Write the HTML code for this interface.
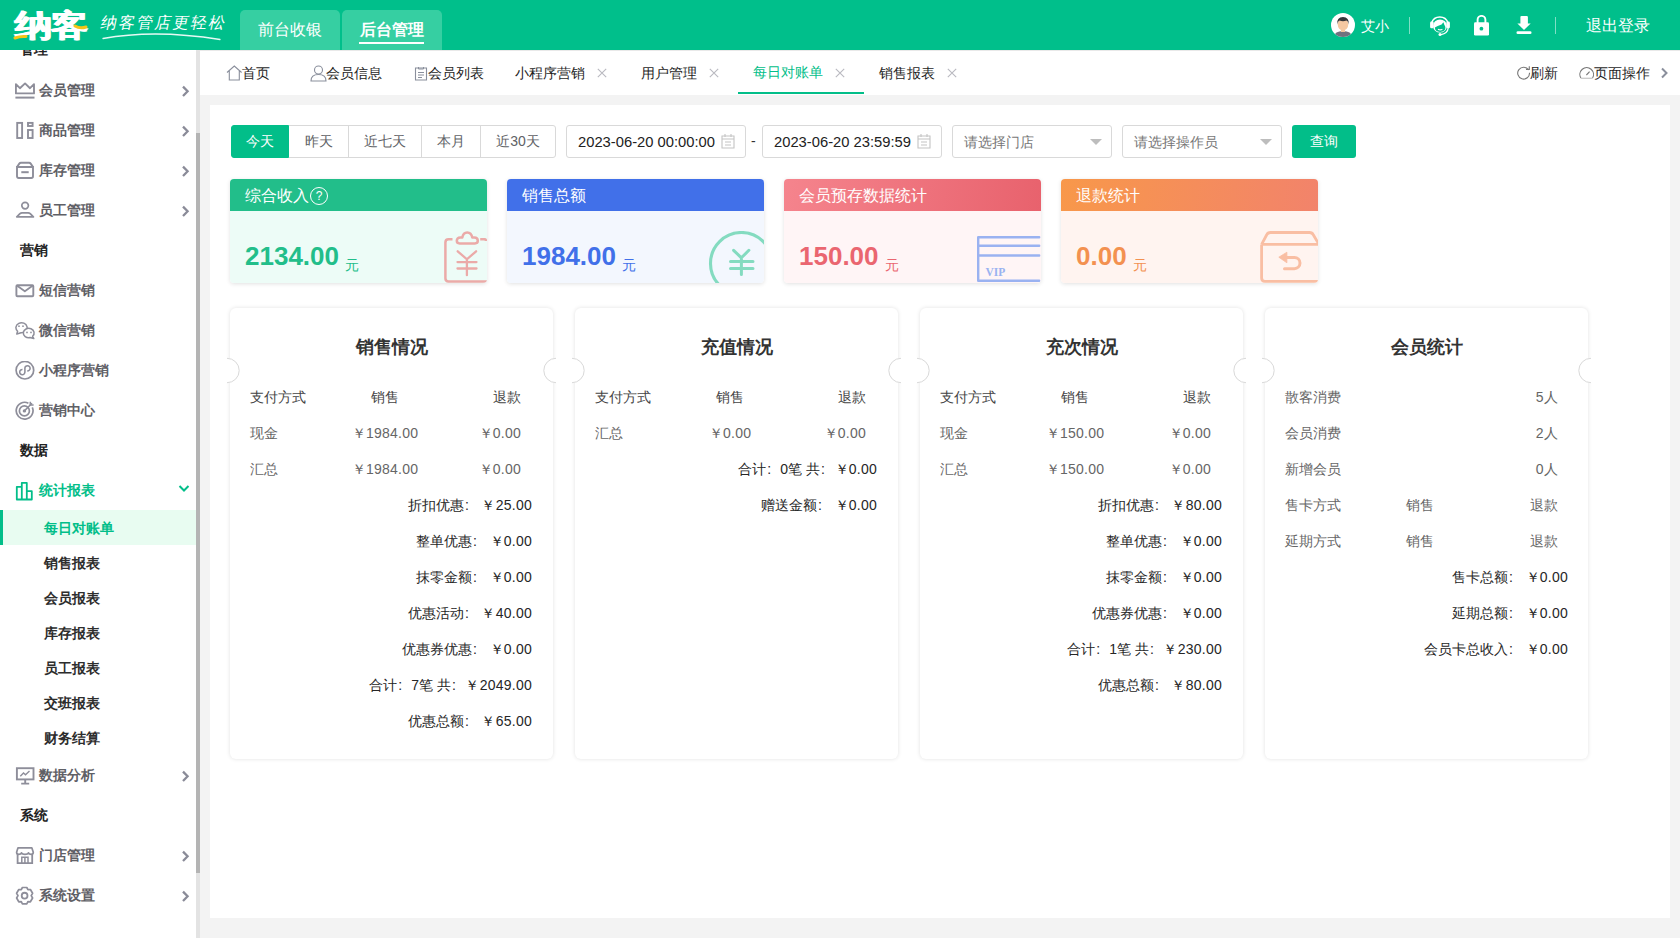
<!DOCTYPE html>
<html><head><meta charset="utf-8">
<style>
*{box-sizing:border-box;margin:0;padding:0}
html,body{width:1680px;height:938px;overflow:hidden;background:#f3f3f3;font-family:"Liberation Sans",sans-serif;font-size:14px;color:#333}
.abs{position:absolute}
#hdr{position:absolute;left:0;top:0;width:1680px;height:50px;background:#00bf8b}
.htab{position:absolute;top:10px;height:40px;width:100px;background:#36cfa2;border-radius:5px 5px 0 0;color:#fff;font-size:16px;text-align:center;line-height:40px}
#side{position:absolute;left:0;top:50px;width:196px;height:888px;background:#fff;overflow:hidden}
#sbar{position:absolute;left:196px;top:50px;width:4px;height:888px;background:#e3e3e3}
#sthumb{position:absolute;left:196px;top:133px;width:4px;height:740px;background:#b4b4b4}
.si{position:absolute;left:0;width:196px;height:20px;line-height:20px;font-weight:bold;color:#5f6066}
.si .t{position:absolute;left:39px;top:0}
.si svg.ic{position:absolute;left:15px;top:0}
.si .chev{position:absolute;left:181px;top:5px}
.gt{position:absolute;left:20px;height:20px;line-height:20px;font-weight:bold;color:#222}
.sub{position:absolute;left:44px;height:20px;line-height:20px;font-weight:bold;color:#2d2d2d}
#tabs{position:absolute;left:200px;top:50px;width:1480px;height:45px;background:#fff}
.tb{position:absolute;top:13px;height:20px;line-height:20px;color:#1e1e1e;white-space:nowrap}
.tb .x{color:#bbb;font-size:15px}
#panel{position:absolute;left:210px;top:105px;width:1460px;height:813px;background:#fff}
.btn{position:absolute;top:125px;height:33px;line-height:31px;border:1px solid #d9d9d9;color:#606266;text-align:center}
.inp{position:absolute;top:125px;height:33px;border:1px solid #d9d9d9;border-radius:3px;background:#fff}
.card{position:absolute;top:179px;width:257px;height:104px;border-radius:4px;overflow:hidden;box-shadow:0 1px 4px rgba(0,0,0,.12)}
.card .h{height:32px;line-height:32px;padding-left:15px;padding-top:1px;color:#fff;font-size:16px}
.card .b{height:72px;position:relative}
.card .v{position:absolute;left:15px;top:30px;font-size:26px;font-weight:bold;line-height:30px;white-space:nowrap}
.card .v small{font-size:14px;font-weight:normal;margin-left:6px;position:relative;top:5px}
.ic2{position:absolute;right:0;bottom:0}
.tk{position:absolute;top:308px;width:323px;height:451px;background:#fff;border-radius:6px;box-shadow:0 0 4px rgba(0,0,0,.12)}
.tk .tt{position:absolute;left:0;width:323px;top:336px;text-align:center;font-size:18px;font-weight:bold;color:#333}
.row{position:absolute;height:20px;line-height:20px;white-space:nowrap}
.val,.dg{letter-spacing:0.25px}
.cl{display:inline-block;width:14px;padding-left:1px;font-style:normal;text-align:left}
</style></head><body>
<div id="hdr">
  <div class="abs" style="left:15px;top:6px;height:40px;color:#fff;font-size:31px;font-weight:900;line-height:40px;letter-spacing:-1px;white-space:nowrap;transform:scaleX(1.2);transform-origin:0 0;text-shadow:0.5px 0 0 #fff,-0.5px 0 0 #fff">纳客</div>
  <svg class="abs" style="left:10px;top:20px" width="80" height="22" viewBox="0 0 80 22"><path d="M5 18Q10 16 16 16.5" stroke="#f5c518" stroke-width="3" fill="none" stroke-linecap="round"/><path d="M65 6Q70 9 76 7" stroke="#f5c518" stroke-width="3" fill="none" stroke-linecap="round"/></svg>
  <div class="abs" style="left:101px;top:12px;width:130px;height:22px;color:#fff;font-size:16px;line-height:22px;letter-spacing:2px;white-space:nowrap;transform:skewX(-12deg);font-family:'Liberation Serif',serif">纳客管店更轻松</div>
  <svg class="abs" style="left:100px;top:30px" width="125" height="14" viewBox="0 0 125 14"><path d="M3 8.5Q55 -1 120 9.5" stroke="#fff" stroke-width="1.3" fill="none" stroke-linecap="round" opacity=".9"/></svg>
  <svg class="abs" style="left:1331px;top:13px" width="24" height="24" viewBox="0 0 24 24"><defs><clipPath id="av"><circle cx="12" cy="12" r="12"/></clipPath></defs><circle cx="12" cy="12" r="12" fill="#fff"/><g clip-path="url(#av)"><path d="M2.5 25Q3 18 12 18Q21 18 21.5 25Z" fill="#71717f"/><rect x="10" y="15" width="4" height="4" fill="#f3c6a0"/><ellipse cx="12" cy="11.3" rx="5.3" ry="6.2" fill="#f5c8a2"/><path d="M6.2 11.5Q5.5 4 12 4Q18.3 4 17.8 11.5Q17.2 8 15.5 7.5Q12 8.8 8.5 7.5Q6.8 8 6.2 11.5Z" fill="#35363a"/></g></svg>
  <svg class="abs" style="left:1429px;top:13px" width="22" height="23" viewBox="0 0 22 23"><path d="M2.6 10A8.6 8.6 0 0 1 19 10" fill="none" stroke="#fff" stroke-width="1.4"/><ellipse cx="11" cy="13" rx="6.9" ry="6.6" fill="#fff"/><path d="M5.9 14.6Q8.2 12.6 12.6 11.4L14.4 9.2L15.3 11.7Q16.4 13 16.4 14.8Q16.4 18.9 11.2 18.9Q5.9 18.9 5.9 14.6Z" fill="#00bf8b"/><path d="M9 16.2Q11.2 17.6 13.4 16.2" fill="none" stroke="#fff" stroke-width="1.1"/><rect x="1.1" y="8.6" width="3.6" height="6.6" rx="1.3" fill="#fff"/><rect x="17.3" y="8.6" width="3.6" height="6.6" rx="1.3" fill="#fff"/><path d="M19.2 15Q18.6 20.6 12 21.6" fill="none" stroke="#fff" stroke-width="1.3"/><circle cx="11" cy="21.5" r="1.5" fill="#fff"/></svg>
  <svg class="abs" style="left:1473px;top:15px" width="17" height="21" viewBox="0 0 17 21"><path d="M4.6 8.5V4.8A3.9 3.9 0 0 1 12.4 4.8V8.5" fill="none" stroke="#fff" stroke-width="1.9"/><rect x="1" y="7.3" width="15" height="13.2" rx="1.3" fill="#fff"/><circle cx="8.4" cy="13.7" r="1.9" fill="#00bf8b"/></svg>
  <svg class="abs" style="left:1516px;top:15px" width="16" height="20" viewBox="0 0 16 20"><rect x="4.4" y="0.9" width="7.5" height="8.5" rx="1.2" fill="#fff"/><path d="M1.4 8.4H14.7L8 15.1Z" fill="#fff"/><rect x="0.5" y="16.2" width="15" height="2.9" rx="1.3" fill="#fff"/></svg>

  <div class="htab" style="left:240px">前台收银</div>
  <div class="htab" style="left:342px;font-weight:bold">后台管理<div style="position:absolute;left:17px;top:32px;width:65px;height:2px;background:#fff"></div></div>
  <div class="abs" style="left:1361px;top:16px;color:#fff;font-size:14px;line-height:20px">艾小</div>
  <div class="abs" style="left:1409px;top:17px;width:1px;height:17px;background:rgba(255,255,255,.5)"></div>
  <div class="abs" style="left:1555px;top:17px;width:1px;height:17px;background:rgba(255,255,255,.5)"></div>
  <div class="abs" style="left:1586px;top:15px;color:#fff;font-size:16px;line-height:22px">退出登录</div>
</div>
<div id="side">
  <div class="gt" style="top:-11px;color:#222">管理</div>
  <!-- 会员管理 -->
  <div class="si" style="top:30px">
    <svg class="ic" width="21" height="20" viewBox="0 0 21 20" style="top:2px"><path d="M0.9 11.4V2.2L4.9 6.2L10.05 1.4L15 6.2L19 2.2V11.4Z" fill="none" stroke="#8e8e9a" stroke-width="1.9" stroke-linejoin="round"/><path d="M0.4 15.6H19.5" stroke="#8e8e9a" stroke-width="2"/></svg>
    <span class="t">会员管理</span><svg class="chev" width="9" height="12" viewBox="0 0 9 12"><path d="M2 1.6L6.6 6.3L2 11" fill="none" stroke="#8a8b98" stroke-width="2.3"/></svg>
  </div>
  <!-- 商品管理 -->
  <div class="si" style="top:70px">
    <svg class="ic" width="21" height="20" viewBox="0 0 21 20" style="top:1px"><rect x="2.2" y="1.9" width="4.9" height="15.1" fill="none" stroke="#8e8e9a" stroke-width="1.9"/><rect x="13" y="1.9" width="4.6" height="3.1" fill="none" stroke="#8e8e9a" stroke-width="1.9"/><rect x="13" y="9" width="4.6" height="8" fill="none" stroke="#8e8e9a" stroke-width="1.9"/></svg>
    <span class="t">商品管理</span><svg class="chev" width="9" height="12" viewBox="0 0 9 12"><path d="M2 1.6L6.6 6.3L2 11" fill="none" stroke="#8a8b98" stroke-width="2.3"/></svg>
  </div>
  <!-- 库存管理 -->
  <div class="si" style="top:110px">
    <svg class="ic" width="21" height="20" viewBox="0 0 21 20" style="top:1px"><path d="M2 6L4.3 2.6Q4.9 1.7 6 1.7H14Q15.1 1.7 15.7 2.6L18 6" fill="none" stroke="#8e8e9a" stroke-width="1.9" stroke-linejoin="round"/><path d="M2 6H18V15.3Q18 17 16.3 17H3.7Q2 17 2 15.3Z" fill="none" stroke="#8e8e9a" stroke-width="1.9"/><path d="M6.3 11.2H13.7" stroke="#8e8e9a" stroke-width="2"/></svg>
    <span class="t">库存管理</span><svg class="chev" width="9" height="12" viewBox="0 0 9 12"><path d="M2 1.6L6.6 6.3L2 11" fill="none" stroke="#8a8b98" stroke-width="2.3"/></svg>
  </div>
  <!-- 员工管理 -->
  <div class="si" style="top:150px">
    <svg class="ic" width="21" height="20" viewBox="0 0 21 20" style="top:1px"><circle cx="10.1" cy="4.6" r="3.3" fill="none" stroke="#8e8e9a" stroke-width="1.7"/><path d="M1.8 15.8L5 12.6Q5.8 11.9 7 11.9H13.2Q14.4 11.9 15.2 12.6L18.4 15.8Z" fill="none" stroke="#8e8e9a" stroke-width="1.8" stroke-linejoin="round"/></svg>
    <span class="t">员工管理</span><svg class="chev" width="9" height="12" viewBox="0 0 9 12"><path d="M2 1.6L6.6 6.3L2 11" fill="none" stroke="#8a8b98" stroke-width="2.3"/></svg>
  </div>
  <div class="gt" style="top:190px">营销</div>
  <!-- 短信营销 -->
  <div class="si" style="top:230px">
    <svg class="ic" width="21" height="20" viewBox="0 0 21 20" style="top:3px"><rect x="1.4" y="2.3" width="16.9" height="10.9" rx="1" fill="none" stroke="#8e8e9a" stroke-width="1.9"/><path d="M1.8 2.6L9.85 8.3L17.9 2.6" fill="none" stroke="#8e8e9a" stroke-width="1.8" stroke-linejoin="round"/></svg>
    <span class="t">短信营销</span>
  </div>
  <!-- 微信营销 -->
  <div class="si" style="top:270px">
    <svg class="ic" width="21" height="20" viewBox="0 0 21 20" style="top:1px"><path d="M2.6 10.3A5.6 5 0 1 1 6 11.7L1.8 13Z" fill="#fff" stroke="#8e8e9a" stroke-width="1.5" stroke-linejoin="round"/><path d="M17.6 15.3A5.4 4.7 0 1 0 15 16.6L18.8 17.6Z" fill="#fff" stroke="#8e8e9a" stroke-width="1.5" stroke-linejoin="round"/><circle cx="4" cy="5.2" r="0.85" fill="#8e8e9a"/><circle cx="8" cy="5.2" r="0.85" fill="#8e8e9a"/><circle cx="12" cy="11.4" r="0.85" fill="#8e8e9a"/><circle cx="16" cy="11.4" r="0.85" fill="#8e8e9a"/></svg>
    <span class="t">微信营销</span>
  </div>
  <!-- 小程序营销 -->
  <div class="si" style="top:310px">
    <svg class="ic" width="21" height="20" viewBox="0 0 21 20" style="top:1px"><circle cx="9.9" cy="9.2" r="8.8" fill="none" stroke="#8e8e9a" stroke-width="1.7"/><path d="M7.5 8.5A2.6 2.6 0 1 0 9.9 11.1V7.3A2.6 2.6 0 1 1 12.3 9.9" fill="none" stroke="#8e8e9a" stroke-width="1.6"/></svg>
    <span class="t">小程序营销</span>
  </div>
  <!-- 营销中心 -->
  <div class="si" style="top:350px">
    <svg class="ic" width="21" height="20" viewBox="0 0 21 20" style="top:1px"><path d="M17.3 6.3A8.4 8.4 0 1 1 13.4 2.2" fill="none" stroke="#8e8e9a" stroke-width="1.7"/><circle cx="9.4" cy="9.9" r="5" fill="none" stroke="#8e8e9a" stroke-width="1.7"/><circle cx="9.4" cy="9.9" r="1.7" fill="#8e8e9a"/><path d="M9.4 9.9L17 2.3" stroke="#8e8e9a" stroke-width="1.5"/><path d="M15.3 0.8V4H18.6" fill="none" stroke="#8e8e9a" stroke-width="1.5"/></svg>
    <span class="t">营销中心</span>
  </div>
  <div class="gt" style="top:390px">数据</div>
  <!-- 统计报表 -->
  <div class="si" style="top:430px;color:#02be89">
    <svg class="ic" width="21" height="20" viewBox="0 0 21 20" style="top:1px"><path d="M1.8 18.5V5.8H6.8V18.5ZM6.8 18.5V1.8H11.8V18.5ZM11.8 18.5V10.2H16.8V18.5Z" fill="none" stroke="#02be89" stroke-width="1.8" stroke-linejoin="round"/></svg>
    <span class="t">统计报表</span><svg class="chev" width="12" height="9" viewBox="0 0 12 9" style="left:178px;top:4px"><path d="M1.5 2L6 6.5L10.5 2" fill="none" stroke="#02be89" stroke-width="2"/></svg>
  </div>
  <div style="position:absolute;left:0;top:460px;width:196px;height:35px;background:#e8fcf1"></div>
  <div style="position:absolute;left:0;top:460px;width:3px;height:35px;background:#02be89"></div>
  <div class="sub" style="top:468px;color:#02be89">每日对账单</div>
  <div class="sub" style="top:503px">销售报表</div>
  <div class="sub" style="top:538px">会员报表</div>
  <div class="sub" style="top:573px">库存报表</div>
  <div class="sub" style="top:608px">员工报表</div>
  <div class="sub" style="top:643px">交班报表</div>
  <div class="sub" style="top:678px">财务结算</div>
  <!-- 数据分析 -->
  <div class="si" style="top:715px">
    <svg class="ic" width="21" height="20" viewBox="0 0 21 20" style="top:2px"><rect x="1.9" y="1.2" width="16.6" height="11.2" fill="none" stroke="#8e8e9a" stroke-width="1.9"/><path d="M5.3 9.3L8.5 6L10.5 7.8L14.5 4" fill="none" stroke="#8e8e9a" stroke-width="1.4"/><path d="M10.2 12.4V16.2M6.2 16.6H14.2" stroke="#8e8e9a" stroke-width="1.9"/></svg>
    <span class="t">数据分析</span><svg class="chev" width="9" height="12" viewBox="0 0 9 12"><path d="M2 1.6L6.6 6.3L2 11" fill="none" stroke="#8a8b98" stroke-width="2.3"/></svg>
  </div>
  <div class="gt" style="top:755px">系统</div>
  <!-- 门店管理 -->
  <div class="si" style="top:795px">
    <svg class="ic" width="21" height="20" viewBox="0 0 21 20" style="top:1px"><path d="M3 1.8H16.8L18.3 6.3Q18.3 8.3 16.2 8.3Q14.2 8.3 13.5 6.8Q12.8 8.3 10 8.3Q7.2 8.3 6.5 6.8Q5.8 8.3 3.7 8.3Q1.6 8.3 1.6 6.3Z" fill="none" stroke="#8e8e9a" stroke-width="1.7" stroke-linejoin="round"/><path d="M2.6 8V17.2H17.2V8" fill="none" stroke="#8e8e9a" stroke-width="1.8"/><path d="M6.8 17.2V11.3H13V17.2M9.9 11.3V17.2" fill="none" stroke="#8e8e9a" stroke-width="1.5"/></svg>
    <span class="t">门店管理</span><svg class="chev" width="9" height="12" viewBox="0 0 9 12"><path d="M2 1.6L6.6 6.3L2 11" fill="none" stroke="#8a8b98" stroke-width="2.3"/></svg>
  </div>
  <!-- 系统设置 -->
  <div class="si" style="top:835px">
    <svg class="ic" width="21" height="20" viewBox="0 0 21 20" style="top:1px"><path d="M7.4 1.5H11.8L12.9 3.7L15.4 3.5L17.6 7.3L16.2 9.6L17.6 12L15.4 15.8L12.9 15.6L11.8 17.8H7.4L6.3 15.6L3.8 15.8L1.6 12L3 9.6L1.6 7.3L3.8 3.5L6.3 3.7Z" fill="none" stroke="#8e8e9a" stroke-width="1.7" stroke-linejoin="round"/><circle cx="9.6" cy="9.65" r="2.9" fill="none" stroke="#8e8e9a" stroke-width="1.8"/></svg>
    <span class="t">系统设置</span><svg class="chev" width="9" height="12" viewBox="0 0 9 12"><path d="M2 1.6L6.6 6.3L2 11" fill="none" stroke="#8a8b98" stroke-width="2.3"/></svg>
  </div>
</div>

<div id="sbar"></div><div id="sthumb"></div>
<div id="tabs">
  <div style="position:absolute;left:0;top:0;width:1480px;height:1px;background:#e9e9e9"></div>
  <svg class="abs" style="left:26px;top:15px" width="17" height="16" viewBox="0 0 17 16"><path d="M1 7.5L8.3 1L15.6 7.5M3.3 5.8V15H13.3V5.8" fill="none" stroke="#8a8f9c" stroke-width="1.1"/></svg>
  <div class="tb" style="left:42px">首页</div>
  <svg class="abs" style="left:110px;top:15px" width="17" height="17" viewBox="0 0 17 17"><circle cx="8.5" cy="5" r="4" fill="none" stroke="#8a8f9c" stroke-width="1.1"/><path d="M1 16Q1 9.5 8.5 9.5Q16 9.5 16 16Z" fill="none" stroke="#8a8f9c" stroke-width="1.1"/></svg>
  <div class="tb" style="left:126px">会员信息</div>
  <svg class="abs" style="left:214px;top:16px" width="14" height="15" viewBox="0 0 14 15"><path d="M1.5 2H12.5V14H1.5Z" fill="none" stroke="#8a8f9c" stroke-width="1.1"/><path d="M4.5 1V3H9.5V1M4 6.5H10M4 9H10M4 11.5H8" fill="none" stroke="#8a8f9c" stroke-width="1"/></svg>
  <div class="tb" style="left:228px">会员列表</div>
  <div class="tb" style="left:315px">小程序营销</div><div class="tb" style="left:397px;width:10px"><svg width="10" height="10" viewBox="0 0 10 10" style="position:absolute;left:0;top:5px"><path d="M0.8 0.8L9.2 9.2M9.2 0.8L0.8 9.2" stroke="#b9b9c0" stroke-width="1.1"/></svg></div>
  <div class="tb" style="left:441px">用户管理</div><div class="tb" style="left:509px;width:10px"><svg width="10" height="10" viewBox="0 0 10 10" style="position:absolute;left:0;top:5px"><path d="M0.8 0.8L9.2 9.2M9.2 0.8L0.8 9.2" stroke="#b9b9c0" stroke-width="1.1"/></svg></div>
  <div class="tb" style="left:553px;top:12px;color:#02be89">每日对账单</div><div class="tb" style="left:635px;width:10px"><svg width="10" height="10" viewBox="0 0 10 10" style="position:absolute;left:0;top:5px"><path d="M0.8 0.8L9.2 9.2M9.2 0.8L0.8 9.2" stroke="#b9b9c0" stroke-width="1.1"/></svg></div>
  <div style="position:absolute;left:538px;top:42px;width:126px;height:2px;background:#02be89"></div>
  <div class="tb" style="left:679px">销售报表</div><div class="tb" style="left:747px;width:10px"><svg width="10" height="10" viewBox="0 0 10 10" style="position:absolute;left:0;top:5px"><path d="M0.8 0.8L9.2 9.2M9.2 0.8L0.8 9.2" stroke="#b9b9c0" stroke-width="1.1"/></svg></div>
  <svg class="abs" style="left:1316px;top:15px" width="15" height="15" viewBox="0 0 15 15"><path d="M12.6 5A5.9 5.9 0 1 0 13.5 7.8" fill="none" stroke="#777" stroke-width="1.1"/><path d="M13.3 1.2V4.4H10" fill="none" stroke="#777" stroke-width="1.1"/></svg>
  <div class="tb" style="left:1330px">刷新</div>
  <svg class="abs" style="left:1379px;top:16px" width="16" height="14" viewBox="0 0 16 14"><path d="M1.9 12A6.8 6.8 0 1 1 13.5 12" fill="none" stroke="#777" stroke-width="1.1"/><path d="M1.8 12.3H13.6" stroke="#c9c9c9" stroke-width="1.3"/><path d="M7.4 9L10.6 5.6" stroke="#777" stroke-width="1.1"/></svg>
  <div class="tb" style="left:1394px">页面操作</div>
  <svg class="abs" style="left:1460px;top:17px" width="9" height="12" viewBox="0 0 9 12"><path d="M2 1.5L6.5 6L2 10.5" fill="none" stroke="#8a8f9c" stroke-width="2"/></svg>
</div>

<div id="panel"></div>
<!-- filter -->
<div class="btn" style="left:231px;width:58px;background:#02be89;border-color:#02be89;color:#fff;border-radius:3px 0 0 3px">今天</div>
<div class="btn" style="left:289px;width:60px;border-left:none">昨天</div>
<div class="btn" style="left:348px;width:74px">近七天</div>
<div class="btn" style="left:421px;width:60px">本月</div>
<div class="btn" style="left:480px;width:76px;border-radius:0 3px 3px 0">近30天</div>
<div class="inp" style="left:566px;width:180px"><span class="abs" style="left:11px;top:6px;line-height:20px;color:#222;font-size:14.75px;white-space:nowrap">2023-06-20 00:00:00</span>
 <svg class="abs" style="left:154px;top:7px" width="14" height="16" viewBox="0 0 14 16"><path d="M1 3H13V15H1Z" fill="none" stroke="#c4c4c4" stroke-width="1.1"/><path d="M4 1V4M10 1V4M1 6H13M4 9H10M4 12H10" fill="none" stroke="#c4c4c4" stroke-width="1.1"/></svg></div>
<div class="abs" style="left:751px;top:132px;line-height:18px;color:#333">-</div>
<div class="inp" style="left:762px;width:180px"><span class="abs" style="left:11px;top:6px;line-height:20px;color:#222;font-size:14.75px;white-space:nowrap">2023-06-20 23:59:59</span>
 <svg class="abs" style="left:154px;top:7px" width="14" height="16" viewBox="0 0 14 16"><path d="M1 3H13V15H1Z" fill="none" stroke="#c4c4c4" stroke-width="1.1"/><path d="M4 1V4M10 1V4M1 6H13M4 9H10M4 12H10" fill="none" stroke="#c4c4c4" stroke-width="1.1"/></svg></div>
<div class="inp" style="left:952px;width:160px"><span class="abs" style="left:11px;top:7px;line-height:18px;color:#777">请选择门店</span>
 <svg class="abs" style="left:137px;top:13px" width="12" height="7" viewBox="0 0 12 7"><path d="M0 0H12L6 6Z" fill="#bdbdbd"/></svg></div>
<div class="inp" style="left:1122px;width:160px"><span class="abs" style="left:11px;top:7px;line-height:18px;color:#777">请选择操作员</span>
 <svg class="abs" style="left:137px;top:13px" width="12" height="7" viewBox="0 0 12 7"><path d="M0 0H12L6 6Z" fill="#bdbdbd"/></svg></div>
<div class="abs" style="left:1292px;top:125px;width:64px;height:33px;background:#02be89;border-radius:3px;color:#fff;text-align:center;line-height:33px">查询</div>

<!-- stat cards -->
<div class="card" style="left:230px">
  <div class="h" style="background:#22be8a">综合收入<span style="display:inline-block;width:18px;height:18px;border:1px solid #fff;border-radius:50%;text-align:center;line-height:16px;font-size:12px;vertical-align:1px;margin-left:1px">?</span></div>
  <div class="b" style="background:#edfcf7">
    <div class="v" style="color:#22be8a">2134.00<small>元</small></div>
    <svg class="ic2" width="44" height="52" viewBox="0 0 44 52"><path d="M9.5 8.2H5.6Q2.4 8.2 2.4 11.4V47.3Q2.4 50.5 5.6 50.5H44M37.2 8.2H41.5Q43 8.2 43 10" fill="none" stroke="#ebaaa8" stroke-width="2.5"/><path d="M16.6 12.4H31.9Q34.8 12.4 34.8 9.8Q34.8 6.5 31.3 6.5H29.3Q28.3 1.4 24.2 1.4Q20.2 1.4 19.3 6.5H17.3Q13.8 6.5 13.8 9.8Q13.8 12.4 16.6 12.4Z" fill="none" stroke="#ebaaa8" stroke-width="2.5" stroke-linejoin="round"/><path d="M14.7 20.3L23.9 28.3L33.1 20.3M14.5 31.1H33.5M14.5 37.5H33.5M23.9 28.3V44.2" fill="none" stroke="#ebaaa8" stroke-width="2.3" stroke-linecap="round"/></svg>
  </div>
</div>
<div class="card" style="left:507px">
  <div class="h" style="background:#4170e9">销售总额</div>
  <div class="b" style="background:#f3f7fe">
    <div class="v" style="color:#4170e9">1984.00<small>元</small></div>
    <svg class="ic2" width="60" height="52" viewBox="0 0 60 52"><circle cx="37.4" cy="32.4" r="30.9" fill="none" stroke="#84dbc0" stroke-width="3.1"/><path d="M29.6 19.3L37.4 26.8L44.9 19.3M26.5 30.5H49M26.5 37.5H49M37.4 26.8V43.5" fill="none" stroke="#84dbc0" stroke-width="3" stroke-linecap="round" stroke-linejoin="round"/></svg>
  </div>
</div>
<div class="card" style="left:784px">
  <div class="h" style="background:linear-gradient(100deg,#f5848d,#e8626d)">会员预存数据统计</div>
  <div class="b" style="background:#fff5f6">
    <div class="v" style="color:#ea6670">150.00<small>元</small></div>
    <svg class="ic2" width="66" height="48" viewBox="0 0 66 48"><path d="M64.2 2.2H3.2V45.7H64.2M3.2 10.7H64.2M3.2 20.5H64.2" fill="none" stroke="#9ab2f1" stroke-width="2.4" stroke-linecap="round" stroke-linejoin="round"/><text x="10.5" y="40.5" font-family="Liberation Serif" font-weight="bold" font-size="11.5" fill="#9ab2f1">VIP</text></svg>
  </div>
</div>
<div class="card" style="left:1061px">
  <div class="h" style="background:linear-gradient(100deg,#f8984a,#f2836b)">退款统计</div>
  <div class="b" style="background:#fff4f0">
    <div class="v" style="color:#f39150">0.00<small>元</small></div>
    <svg class="ic2" width="60" height="52" viewBox="0 0 60 52"><path d="M3.6 13.4L8.6 4Q9.8 1.5 12.5 1.5H51.5Q54.2 1.5 55.4 4L60.5 12.6M3.6 13.4H60M3.6 13.4V47Q3.6 50.3 7 50.3H60" fill="none" stroke="#f9bea3" stroke-width="2.8" stroke-linejoin="round"/><path d="M20.8 26.2L28.9 21.2L28.9 31.8Z" fill="#f9bea3" stroke="#f9bea3" stroke-width="0.8" stroke-linejoin="round"/><path d="M27.5 26.5H36.4A5.6 5.6 0 0 1 36.4 37.7H26.5" fill="none" stroke="#f9bea3" stroke-width="3" stroke-linecap="round"/></svg>
  </div>
</div>

<!--TICKETS-->
<div class="tk" style="left:230px"></div>
<div class="row" style="left:230px;width:323px;top:335px;height:24px;line-height:24px;text-align:center;font-size:18px;font-weight:bold;color:#333">销售情况</div>
<div class="tk" style="left:575px"></div>
<div class="row" style="left:575px;width:323px;top:335px;height:24px;line-height:24px;text-align:center;font-size:18px;font-weight:bold;color:#333">充值情况</div>
<div class="tk" style="left:920px"></div>
<div class="row" style="left:920px;width:323px;top:335px;height:24px;line-height:24px;text-align:center;font-size:18px;font-weight:bold;color:#333">充次情况</div>
<div class="tk" style="left:1265px"></div>
<div class="row" style="left:1265px;width:323px;top:335px;height:24px;line-height:24px;text-align:center;font-size:18px;font-weight:bold;color:#333">会员统计</div>
<div class="row" style="left:250px;top:387px;color:#444">支付方式</div><div class="row" style="left:335px;width:100px;text-align:center;top:387px;color:#444"><span class="dg">销售</span></div><div class="row" style="left:371px;width:150px;text-align:right;top:387px;color:#444"><span class="dg">退款</span></div>
<div class="row" style="left:250px;top:423px;color:#666">现金</div><div class="row" style="left:335px;width:100px;text-align:center;top:423px;color:#666"><span class="dg">￥1984.00</span></div><div class="row" style="left:371px;width:150px;text-align:right;top:423px;color:#666"><span class="dg">￥0.00</span></div>
<div class="row" style="left:250px;top:459px;color:#666">汇总</div><div class="row" style="left:335px;width:100px;text-align:center;top:459px;color:#666"><span class="dg">￥1984.00</span></div><div class="row" style="left:371px;width:150px;text-align:right;top:459px;color:#666"><span class="dg">￥0.00</span></div>
<div class="row" style="left:282px;width:250px;text-align:right;top:495px;color:#262626">折扣优惠<i class="cl">:</i><span class="val" style="margin-left:3.5px">￥25.00</span></div>
<div class="row" style="left:282px;width:250px;text-align:right;top:531px;color:#262626">整单优惠<i class="cl">:</i><span class="val" style="margin-left:3.5px">￥0.00</span></div>
<div class="row" style="left:282px;width:250px;text-align:right;top:567px;color:#262626">抹零金额<i class="cl">:</i><span class="val" style="margin-left:3.5px">￥0.00</span></div>
<div class="row" style="left:282px;width:250px;text-align:right;top:603px;color:#262626">优惠活动<i class="cl">:</i><span class="val" style="margin-left:3.5px">￥40.00</span></div>
<div class="row" style="left:282px;width:250px;text-align:right;top:639px;color:#262626">优惠券优惠<i class="cl">:</i><span class="val" style="margin-left:3.5px">￥0.00</span></div>
<div class="row" style="left:282px;width:250px;text-align:right;top:675px;color:#262626">合计<i class="cl">:</i>7笔 共<i class="cl">:</i><span class="val" style="margin-left:0.5px">￥2049.00</span></div>
<div class="row" style="left:282px;width:250px;text-align:right;top:711px;color:#262626">优惠总额<i class="cl">:</i><span class="val" style="margin-left:3.5px">￥65.00</span></div>
<div class="row" style="left:595px;top:387px;color:#444">支付方式</div><div class="row" style="left:680px;width:100px;text-align:center;top:387px;color:#444"><span class="dg">销售</span></div><div class="row" style="left:716px;width:150px;text-align:right;top:387px;color:#444"><span class="dg">退款</span></div>
<div class="row" style="left:595px;top:423px;color:#666">汇总</div><div class="row" style="left:680px;width:100px;text-align:center;top:423px;color:#666"><span class="dg">￥0.00</span></div><div class="row" style="left:716px;width:150px;text-align:right;top:423px;color:#666"><span class="dg">￥0.00</span></div>
<div class="row" style="left:627px;width:250px;text-align:right;top:459px;color:#262626">合计<i class="cl">:</i>0笔 共<i class="cl">:</i><span class="val" style="margin-left:0.5px">￥0.00</span></div>
<div class="row" style="left:627px;width:250px;text-align:right;top:495px;color:#262626">赠送金额<i class="cl">:</i><span class="val" style="margin-left:3.5px">￥0.00</span></div>
<div class="row" style="left:940px;top:387px;color:#444">支付方式</div><div class="row" style="left:1025px;width:100px;text-align:center;top:387px;color:#444"><span class="dg">销售</span></div><div class="row" style="left:1061px;width:150px;text-align:right;top:387px;color:#444"><span class="dg">退款</span></div>
<div class="row" style="left:940px;top:423px;color:#666">现金</div><div class="row" style="left:1025px;width:100px;text-align:center;top:423px;color:#666"><span class="dg">￥150.00</span></div><div class="row" style="left:1061px;width:150px;text-align:right;top:423px;color:#666"><span class="dg">￥0.00</span></div>
<div class="row" style="left:940px;top:459px;color:#666">汇总</div><div class="row" style="left:1025px;width:100px;text-align:center;top:459px;color:#666"><span class="dg">￥150.00</span></div><div class="row" style="left:1061px;width:150px;text-align:right;top:459px;color:#666"><span class="dg">￥0.00</span></div>
<div class="row" style="left:972px;width:250px;text-align:right;top:495px;color:#262626">折扣优惠<i class="cl">:</i><span class="val" style="margin-left:3.5px">￥80.00</span></div>
<div class="row" style="left:972px;width:250px;text-align:right;top:531px;color:#262626">整单优惠<i class="cl">:</i><span class="val" style="margin-left:3.5px">￥0.00</span></div>
<div class="row" style="left:972px;width:250px;text-align:right;top:567px;color:#262626">抹零金额<i class="cl">:</i><span class="val" style="margin-left:3.5px">￥0.00</span></div>
<div class="row" style="left:972px;width:250px;text-align:right;top:603px;color:#262626">优惠券优惠<i class="cl">:</i><span class="val" style="margin-left:3.5px">￥0.00</span></div>
<div class="row" style="left:972px;width:250px;text-align:right;top:639px;color:#262626">合计<i class="cl">:</i>1笔 共<i class="cl">:</i><span class="val" style="margin-left:0.5px">￥230.00</span></div>
<div class="row" style="left:972px;width:250px;text-align:right;top:675px;color:#262626">优惠总额<i class="cl">:</i><span class="val" style="margin-left:3.5px">￥80.00</span></div>
<div class="row" style="left:1285px;top:387px;color:#666">散客消费</div><div class="row" style="left:1408px;width:150px;text-align:right;top:387px;color:#666"><span class="dg">5人</span></div>
<div class="row" style="left:1285px;top:423px;color:#666">会员消费</div><div class="row" style="left:1408px;width:150px;text-align:right;top:423px;color:#666"><span class="dg">2人</span></div>
<div class="row" style="left:1285px;top:459px;color:#666">新增会员</div><div class="row" style="left:1408px;width:150px;text-align:right;top:459px;color:#666"><span class="dg">0人</span></div>
<div class="row" style="left:1285px;top:495px;color:#666">售卡方式</div><div class="row" style="left:1370px;width:100px;text-align:center;top:495px;color:#666"><span class="dg">销售</span></div><div class="row" style="left:1408px;width:150px;text-align:right;top:495px;color:#666"><span class="dg">退款</span></div>
<div class="row" style="left:1285px;top:531px;color:#666">延期方式</div><div class="row" style="left:1370px;width:100px;text-align:center;top:531px;color:#666"><span class="dg">销售</span></div><div class="row" style="left:1408px;width:150px;text-align:right;top:531px;color:#666"><span class="dg">退款</span></div>
<div class="row" style="left:1318px;width:250px;text-align:right;top:567px;color:#262626">售卡总额<i class="cl">:</i><span class="val" style="margin-left:3.5px">￥0.00</span></div>
<div class="row" style="left:1318px;width:250px;text-align:right;top:603px;color:#262626">延期总额<i class="cl">:</i><span class="val" style="margin-left:3.5px">￥0.00</span></div>
<div class="row" style="left:1318px;width:250px;text-align:right;top:639px;color:#262626">会员卡总收入<i class="cl">:</i><span class="val" style="margin-left:3.5px">￥0.00</span></div>
<svg class="abs" style="left:0;top:0;pointer-events:none" width="1680" height="938"><rect x="214" y="357" width="13" height="26" fill="#fff"/><path d="M227 358.3A12.2 12.2 0 0 1 227 382.7Z" fill="#fff"/><path d="M227 358.3A12.2 12.2 0 0 1 227 382.7" fill="none" stroke="#d9d9d9" stroke-width="1"/><rect x="556" y="357" width="13" height="26" fill="#fff"/><path d="M556 358.3A12.2 12.2 0 0 0 556 382.7Z" fill="#fff"/><path d="M556 358.3A12.2 12.2 0 0 0 556 382.7" fill="none" stroke="#d9d9d9" stroke-width="1"/><rect x="559" y="357" width="13" height="26" fill="#fff"/><path d="M572 358.3A12.2 12.2 0 0 1 572 382.7Z" fill="#fff"/><path d="M572 358.3A12.2 12.2 0 0 1 572 382.7" fill="none" stroke="#d9d9d9" stroke-width="1"/><rect x="901" y="357" width="13" height="26" fill="#fff"/><path d="M901 358.3A12.2 12.2 0 0 0 901 382.7Z" fill="#fff"/><path d="M901 358.3A12.2 12.2 0 0 0 901 382.7" fill="none" stroke="#d9d9d9" stroke-width="1"/><rect x="904" y="357" width="13" height="26" fill="#fff"/><path d="M917 358.3A12.2 12.2 0 0 1 917 382.7Z" fill="#fff"/><path d="M917 358.3A12.2 12.2 0 0 1 917 382.7" fill="none" stroke="#d9d9d9" stroke-width="1"/><rect x="1246" y="357" width="13" height="26" fill="#fff"/><path d="M1246 358.3A12.2 12.2 0 0 0 1246 382.7Z" fill="#fff"/><path d="M1246 358.3A12.2 12.2 0 0 0 1246 382.7" fill="none" stroke="#d9d9d9" stroke-width="1"/><rect x="1249" y="357" width="13" height="26" fill="#fff"/><path d="M1262 358.3A12.2 12.2 0 0 1 1262 382.7Z" fill="#fff"/><path d="M1262 358.3A12.2 12.2 0 0 1 1262 382.7" fill="none" stroke="#d9d9d9" stroke-width="1"/><rect x="1591" y="357" width="13" height="26" fill="#fff"/><path d="M1591 358.3A12.2 12.2 0 0 0 1591 382.7Z" fill="#fff"/><path d="M1591 358.3A12.2 12.2 0 0 0 1591 382.7" fill="none" stroke="#d9d9d9" stroke-width="1"/></svg>
<!--/TICKETS-->
</body></html>
